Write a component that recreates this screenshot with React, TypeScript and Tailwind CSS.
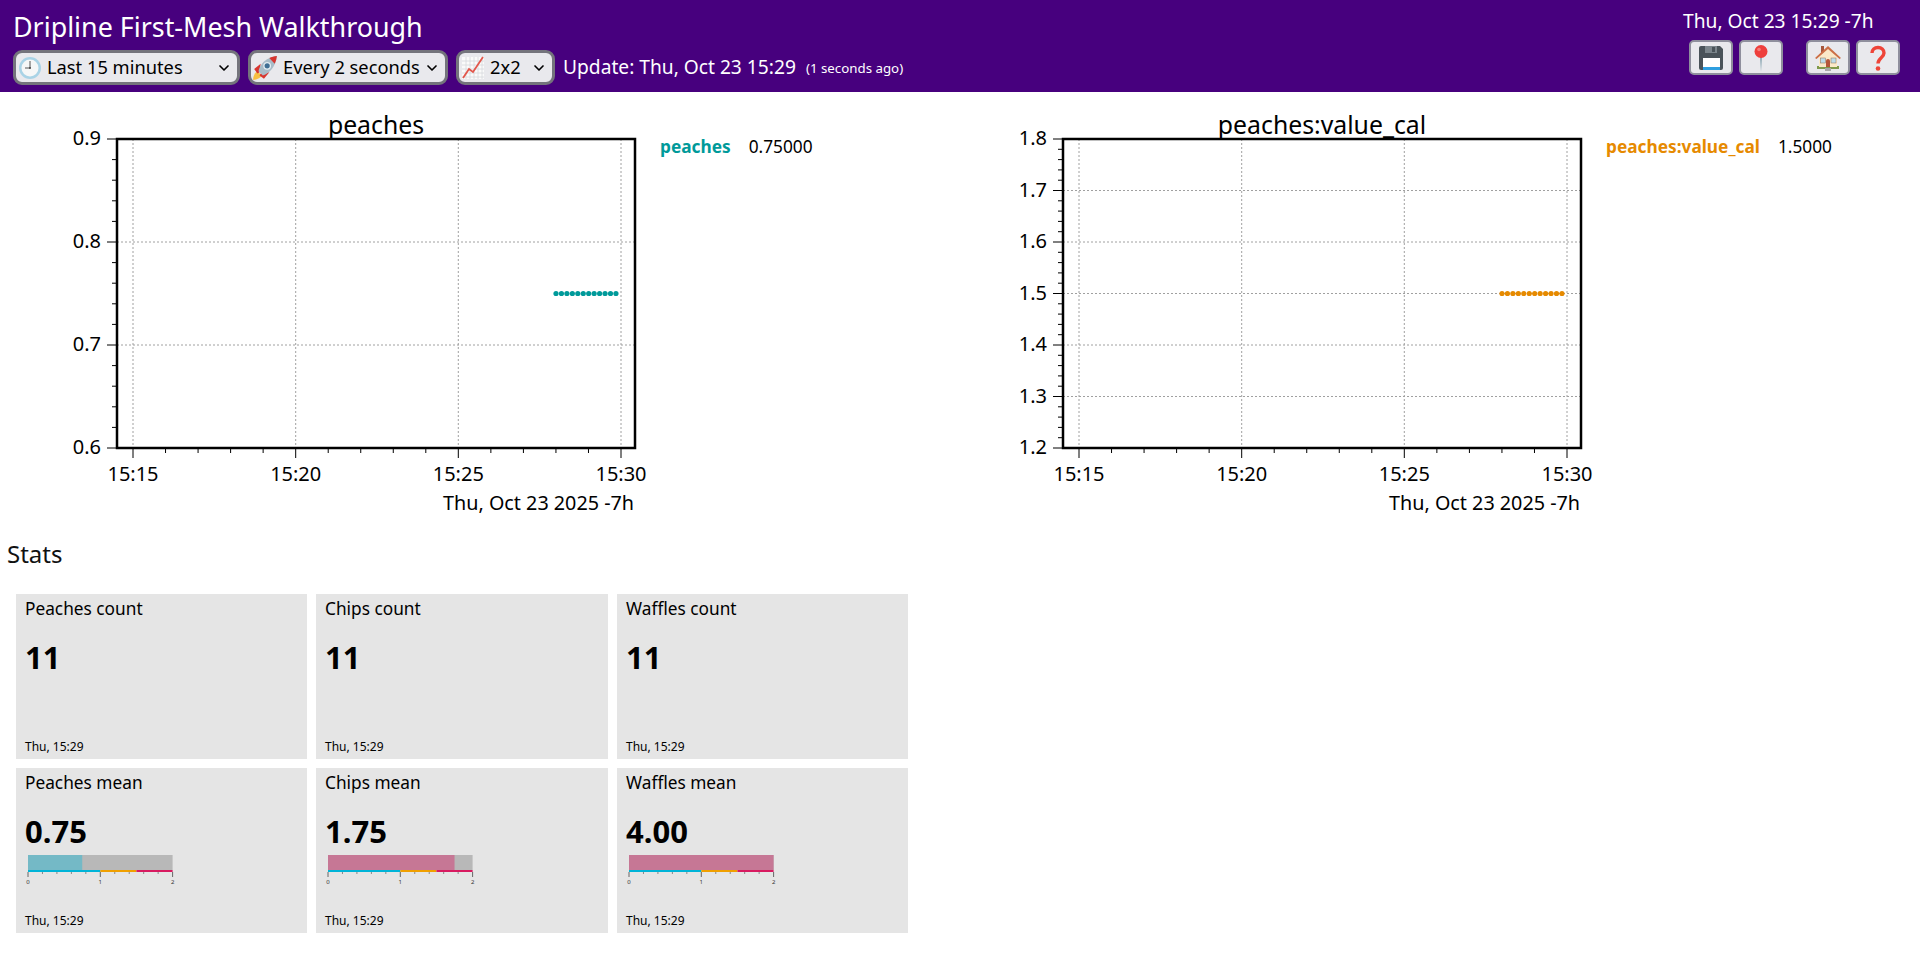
import React from 'react';
import { ChevronDown } from 'lucide-react';

const ClockIcon = () => (
  <svg width="24" height="24" viewBox="0 0 24 24">
    <circle cx="12" cy="12" r="11" fill="#a9d3e6" />
    <circle cx="12" cy="12" r="8.5" fill="#f6f7f7" />
    <path d="M12 5v7H7" fill="none" stroke="#555" strokeWidth="1" />
    <circle cx="12" cy="12" r="1" fill="#444" />
  </svg>
);

const RocketIcon = () => (
  <svg width="26" height="26" viewBox="0 0 24 24" className="-ml-[1px]">
    <path d="M1 23c0-4 2-7 4-8l4 4c-1 2-4 4-8 4z" fill="#f6c042" />
    <path d="M2 13l6-5-1 8-2 1z" fill="#d8352f" />
    <path d="M11 22l5-6-8 1-1 2z" fill="#d8352f" />
    <path d="M6 15C7 9 13 2 23 1c-1 10-7 16-13 18z" fill="#a8bcc8" />
    <path d="M16 2.800c2-1 4.500-1.600 7-1.800-.3 2.500-1 4.800-2 7z" fill="#d8352f" />
    <circle cx="14" cy="10" r="3" fill="#3f6f94" stroke="#e4edf2" strokeWidth="1.200" />
  </svg>
);

const ChartIcon = () => (
  <svg width="24" height="24" viewBox="0 0 24 24">
    <rect x="1" y="1" width="22" height="22" fill="#fafafa" />
    <path
      d="M1 5h22M1 9h22M1 13h22M1 17h22M1 21h22M5 1v22M9 1v22M13 1v22M17 1v22M21 1v22"
      stroke="#d5d8dc"
      strokeWidth="0.800"
    />
    <path d="M2 22l6-9 4 3L22 1" fill="none" stroke="#e2574c" strokeWidth="1.800" />
  </svg>
);

const FloppyIcon = () => (
  <svg width="26" height="26" viewBox="0 0 26 26">
    <path d="M1 3a2 2 0 0 1 2-2h19l3 3v19a2 2 0 0 1-2 2H3a2 2 0 0 1-2-2z" fill="#4a5359" />
    <rect x="7" y="1" width="12" height="7" fill="#7b858b" />
    <rect x="14" y="2" width="3" height="5" fill="#4a5359" />
    <rect x="5" y="13" width="17" height="12" fill="#fff" />
    <rect x="5" y="22" width="17" height="3" fill="#2f9fe0" />
  </svg>
);

const PinIcon = () => (
  <svg width="26" height="28" viewBox="0 0 26 28">
    <path d="M12 12l1 15.500L14 12z" fill="#88a4b0" />
    <circle cx="13" cy="7.500" r="6.500" fill="#ee3f3c" />
    <circle cx="11" cy="5.500" r="1.800" fill="#f77c78" />
  </svg>
);

const HouseIcon = () => (
  <svg width="28" height="28" viewBox="0 0 28 28">
    <rect x="7" y="2" width="3" height="7" fill="#a5563c" />
    <rect x="3" y="22" width="22" height="3" fill="#7f9a4b" />
    <rect x="11" y="24" width="6" height="3" fill="#a8a8a8" />
    <path d="M5 12L14 4l9 8v11H5z" fill="#fbe9c9" />
    <path d="M1 14L14 2l13 12-1.500 1L14 5 2.500 15z" fill="#cc6f47" />
    <rect x="6.500" y="14" width="5" height="5" fill="#bcdcea" stroke="#8a6f5a" strokeWidth="0.500" />
    <rect x="17" y="14" width="5" height="5" fill="#bcdcea" stroke="#8a6f5a" strokeWidth="0.500" />
    <path d="M12 23v-6a2 2 0 0 1 4 0v6z" fill="#b5573a" />
  </svg>
);

const QuestionIcon = () => (
  <svg width="20" height="28" viewBox="0 0 20 28">
    <path
      d="M4 9c0-3.500 2.500-5.500 6-5.500S16 5.500 16 9c0 4.500-6 5-6 10.500"
      fill="none"
      stroke="#ee4438"
      strokeWidth="3.400"
    />
    <circle cx="10" cy="24.500" r="2.300" fill="#ee4438" />
  </svg>
);

const Select = ({
  icon,
  label,
  width,
}: {
  icon: React.ReactNode;
  label: string;
  width: string;
}) => (
  <div
    className={`flex h-[35px] items-center rounded-[9px] border-[3px] border-[#74747c] bg-[#e9e9ed] pl-[2px] pr-[5px] text-black ${width}`}
  >
    {icon}
    <span className="ml-[5px] text-[18.300px] leading-none">{label}</span>
    <ChevronDown className="ml-auto" size={16} strokeWidth={2.500} />
  </div>
);

const IconButton = ({ children, className = '' }: { children: React.ReactNode; className?: string }) => (
  <div
    className={`flex h-[35px] w-[44px] items-center justify-center rounded-[5px] border-2 border-[#8f8f9d] bg-[#e9e9ed] ${className}`}
  >
    {children}
  </div>
);

const Header = () => (
  <header className="flex h-[92px] justify-between bg-[#47007e] text-white">
    <div className="pl-[13px]">
      <h1 className="pt-[9px] text-[26.880px] leading-[36px]">Dripline First-Mesh Walkthrough</h1>
      <div className="mt-[5px] flex items-center gap-[8px]">
        <Select icon={<ClockIcon />} label="Last 15 minutes" width="w-[227px]" />
        <Select icon={<RocketIcon />} label="Every 2 seconds" width="w-[200px]" />
        <Select icon={<ChartIcon />} label="2x2" width="w-[99px]" />
        <span className="text-[19.200px]">Update: Thu, Oct 23 15:29</span>
        <span className="ml-[2px] mt-[3px] text-[13.300px]">(1 seconds ago)</span>
      </div>
    </div>
    <div className="pr-[20px]">
      <p className="-ml-[6px] pt-[9px] text-[19.200px] leading-[24px]">Thu, Oct 23 15:29 -7h</p>
      <div className="mt-[7px] flex">
        <IconButton>
          <FloppyIcon />
        </IconButton>
        <IconButton className="ml-[6px]">
          <PinIcon />
        </IconButton>
        <IconButton className="ml-[23px]">
          <HouseIcon />
        </IconButton>
        <IconButton className="ml-[6px]">
          <QuestionIcon />
        </IconButton>
      </div>
    </div>
  </header>
);

// plot box inside the svg, same for both charts
const LEFT = 117;
const RIGHT = 635;
const TOP = 47;
const BOTTOM = 356;
const X_MAJOR = [133, 295.7, 458.3, 621];
const X_LABELS = ['15:15', '15:20', '15:25', '15:30'];

const Chart = ({
  title,
  yLabels,
  color,
  name,
  value,
}: {
  title: string;
  yLabels: string[];
  color: string;
  name: string;
  value: string;
}) => {
  const yStep = (BOTTOM - TOP) / (yLabels.length - 1);
  const yMajor = yLabels.map((_, i) => TOP + i * yStep);
  const yMinor: number[] = [];
  for (let i = 0; i < yLabels.length - 1; i++) {
    for (let j = 1; j < 5; j++) yMinor.push(TOP + (i + j / 5) * yStep);
  }
  const xMinor: number[] = [];
  for (let i = 0; i < 3; i++) {
    for (let j = 1; j < 5; j++) xMinor.push(133 + (i + j / 5) * 162.67);
  }
  const points = Array.from({ length: 12 }, (_, i) => 556 + i * 5.45);

  return (
    <div className="flex h-[438px] items-start">
      <svg width="640" height="438" className="shrink-0 overflow-visible">
        <text x="376" y="42" textAnchor="middle" fontSize="24.800" fill="#000">
          {title}
        </text>
        {X_MAJOR.map((x) => (
          <line key={x} x1={x} x2={x} y1={TOP} y2={BOTTOM} stroke="#a0a0a0" strokeDasharray="2 2" />
        ))}
        {yMajor.slice(1, -1).map((y) => (
          <line key={y} x1={LEFT} x2={RIGHT} y1={y} y2={y} stroke="#a0a0a0" strokeDasharray="2 2" />
        ))}
        {points.map((x) => (
          <circle key={x} cx={x} cy="201.500" r="2.600" fill={color} />
        ))}
        <rect
          x={LEFT}
          y={TOP}
          width={RIGHT - LEFT}
          height={BOTTOM - TOP}
          fill="none"
          stroke="#000"
          strokeWidth="2.500"
        />
        {yMajor.map((y, i) => (
          <g key={y}>
            <line x1={LEFT - 10} x2={LEFT} y1={y} y2={y} stroke="#000" />
            <text x={LEFT - 16} y={y + 6} textAnchor="end" fontSize="20" fill="#000">
              {yLabels[i]}
            </text>
          </g>
        ))}
        {yMinor.map((y) => (
          <line key={y} x1={LEFT - 5} x2={LEFT} y1={y} y2={y} stroke="#000" />
        ))}
        {X_MAJOR.map((x, i) => (
          <g key={x}>
            <line x1={x} x2={x} y1={BOTTOM} y2={BOTTOM + 10} stroke="#000" />
            <text x={x} y={BOTTOM + 33} textAnchor="middle" fontSize="20" fill="#000">
              {X_LABELS[i]}
            </text>
          </g>
        ))}
        {xMinor.map((x) => (
          <line key={x} x1={x} x2={x} y1={BOTTOM} y2={BOTTOM + 5} stroke="#000" />
        ))}
        <text x={RIGHT - 1} y={BOTTOM + 62} textAnchor="end" fontSize="19.750" fill="#000">
          Thu, Oct 23 2025 -7h
        </text>
      </svg>
      <div className="ml-[20px] mt-[43px] flex gap-[18px] text-[17.280px] leading-[24px]">
        <span className="font-bold" style={{ color }}>
          {name}
        </span>
        <span className="text-black">{value}</span>
      </div>
    </div>
  );
};

const MeanBar = ({ value }: { value: number }) => {
  const scale = 72.3;
  const fill = value > 1.5 ? '#c67795' : '#74b9c6';
  const width = Math.min(value, 2) * scale;
  return (
    <svg width="150" height="32" className="ml-[3px] mt-[4px] shrink-0 overflow-visible">
      <rect x="0" y="0" width={2 * scale} height="15" fill="#b8b8b8" />
      <rect x="0" y="0" width={width} height="15" fill={fill} />
      <rect x="0" y="15" width={scale} height="2" fill="#00b4d8" />
      <rect x={scale} y="15" width={scale / 2} height="2" fill="#f0a000" />
      <rect x={1.500 * scale} y="15" width={scale / 2} height="2" fill="#d81b60" />
      {[0, 1, 2, 3, 4, 5, 6, 7, 8, 9, 10].map((i) => (
        <line
          key={i}
          x1={i * 0.2 * scale}
          x2={i * 0.2 * scale}
          y1="17"
          y2={i % 5 === 0 ? 22 : 19}
          stroke={i % 5 === 0 ? '#666' : '#888'}
        />
      ))}
      {[0, 1, 2].map((n) => (
        <text key={n} x={n * scale} y="29" textAnchor="middle" fontSize="6" fill="#333">
          {n}
        </text>
      ))}
    </svg>
  );
};

const StatCard = ({ title, value, bar }: { title: string; value: string; bar?: number }) => (
  <div className="flex h-[165px] flex-col bg-[#e5e5e5] pl-[9px] pb-[4px] pt-[3px] text-black">
    <div className="text-[17.280px] leading-[24px]">{title}</div>
    <div className="mt-[16px] text-[31px] font-bold leading-[40px]">{value}</div>
    {bar !== undefined && <MeanBar value={bar} />}
    <div className="mt-auto text-[12px] leading-[16px]">Thu, 15:29</div>
  </div>
);

const stats = [
  { title: 'Peaches count', value: '11' },
  { title: 'Chips count', value: '11' },
  { title: 'Waffles count', value: '11' },
  { title: 'Peaches mean', value: '0.75', bar: 0.75 },
  { title: 'Chips mean', value: '1.75', bar: 1.75 },
  { title: 'Waffles mean', value: '4.00', bar: 4 },
];

export default function App() {
  return (
    <div className="min-h-[962px] bg-white font-['Noto_Sans',sans-serif]">
      <Header />
      <div className="grid grid-cols-[946px_946px]">
        <Chart
          title="peaches"
          yLabels={['0.9', '0.8', '0.7', '0.6']}
          color="#009a9a"
          name="peaches"
          value="0.75000"
        />
        <Chart
          title="peaches:value_cal"
          yLabels={['1.8', '1.7', '1.6', '1.5', '1.4', '1.3', '1.2']}
          color="#e68a00"
          name="peaches:value_cal"
          value="1.5000"
        />
      </div>
      <h2 className="pl-[7px] pt-[6px] text-[24px] leading-[36px] text-[#111]">Stats</h2>
      <div className="ml-[16px] mt-[22px] grid w-[892px] grid-cols-[291px_292px_291px] gap-[9px]">
        {stats.map((s) => (
          <StatCard key={s.title} title={s.title} value={s.value} bar={s.bar} />
        ))}
      </div>
    </div>
  );
}
